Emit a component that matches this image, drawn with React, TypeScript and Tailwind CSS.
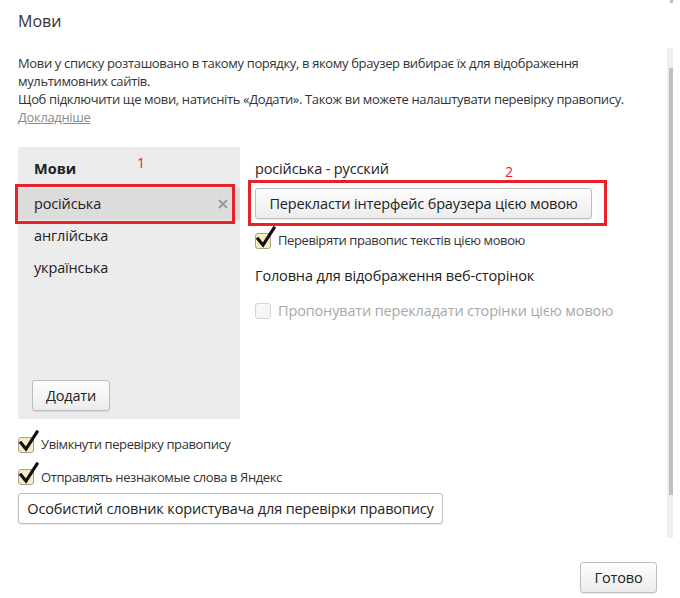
import React from 'react';

const font = { fontFamily: '"Open Sans", "Noto Sans", "Liberation Sans", sans-serif' };

function Check({ checked = true, disabled = false }: { checked?: boolean; disabled?: boolean }) {
  return (
    <span className="relative inline-block w-[16px] h-[16px] shrink-0">
      <span
        className={
          disabled
            ? 'absolute inset-0 rounded-[3px] border border-[#d4d4d4] bg-[#f7f7f7]'
            : 'absolute inset-0 rounded-[3px] border border-[#a8a08a] bg-[#f7ecc0]'
        }
      />
      {checked && (
        <svg className="absolute left-[1px] top-[-7px]" width="20" height="22" viewBox="0 0 20 22">
          <path d="M2 13 L7 19 L18 2" fill="none" stroke="#111" strokeWidth="3.2" strokeLinecap="square" />
        </svg>
      )}
    </span>
  );
}

function Btn({ children, className = '' }: { children: React.ReactNode; className?: string }) {
  return (
    <button
      className={
        'h-[31px] whitespace-nowrap rounded-[3px] border border-[#bdbdbd] text-[14.5px] tracking-[-0.15px] text-[#222] shadow-[0_1px_1px_rgba(0,0,0,0.08)] ' +
        className
      }
    >
      {children}
    </button>
  );
}

const grad = 'bg-gradient-to-b from-[#fdfdfd] to-[#ececec]';

export default function App() {
  const langs = ['російська', 'англійська', 'українська'];
  return (
    <div className="relative w-[680px] h-[598px] bg-white text-[#333] overflow-hidden" style={font}>
      {/* scrollbar */}
      <div className="absolute left-[667px] top-[48px] w-[6px] h-[490px] bg-[#efefef]">
        <div className="ml-[2px] mt-[20px] w-[4px] h-[427px] bg-[#c0c0c0]" />
      </div>
      <div className="absolute left-[670px] top-0 w-[3px] h-[3px] bg-[#bbb]" />

      <div className="pl-[18px] pt-[10px] pr-[30px]">
        <h1 className="text-[16px] leading-[22px] text-[#333]">Мови</h1>

        <p className="mt-[22px] text-[13px] leading-[18px] tracking-[-0.35px] text-[#333]">
          Мови у списку розташовано в такому порядку, в якому браузер вибирає їх для відображення
          <br />
          мультимовних сайтів.
          <br />
          Щоб підключити ще мови, натисніть «Додати». Також ви можете налаштувати перевірку правопису.
          <br />
          <span className="text-[#8a8a8a] underline">Докладніше</span>
        </p>

        <div className="mt-[21px] flex">
          {/* left list */}
          <div className="w-[222px] h-[272px] bg-[#ececec] flex flex-col">
            <div className="relative pl-[16px] pt-[11px] h-[41px] text-[14.5px] font-bold text-[#222]">
              Мови
              <span className="absolute left-[119px] top-[5px] text-[14px] font-normal text-[#e8202a]">1</span>
            </div>
            {langs.map((l, i) => (
              <div
                key={l}
                className={
                  'relative h-[32px] pl-[16px] flex items-center text-[14.5px] tracking-[-0.15px] text-[#222] ' +
                  (i === 0 ? 'bg-[#dcdcdc]' : '')
                }
              >
                {l}
                {i === 0 && (
                  <>
                    <svg className="absolute right-[12px] top-[11px]" width="10" height="10" viewBox="0 0 10 10">
                      <path d="M1 1 L9 9 M9 1 L1 9" stroke="#9a9a9a" strokeWidth="2" />
                    </svg>
                    <div className="absolute left-[-3px] top-[-4px] w-[220px] h-[40px] border-[3px] border-[#e8202a]" />
                  </>
                )}
              </div>
            ))}
            <div className="flex-1" />
            <div className="pl-[14px] pb-[8px]">
              <Btn className={'w-[78px] ' + grad}>Додати</Btn>
            </div>
          </div>

          {/* right pane */}
          <div className="pl-[15px] flex flex-col">
            <div className="relative pt-[11px] h-[41px] text-[14.5px] tracking-[-0.15px] text-[#222]">
              російська - русский
              <span className="absolute left-[250px] top-[14px] text-[14px] text-[#e8202a]">2</span>
            </div>
            <div className="relative">
              <Btn className={'w-[337px] ' + grad}>Перекласти інтерфейс браузера цією мовою</Btn>
              <div className="absolute left-[-7px] top-[-8px] w-[359px] h-[46px] border-[3px] border-[#e8202a]" />
            </div>
            <label className="mt-[12px] flex items-center gap-[7px] text-[13px] text-[#333]">
              <Check />
              <span className="tracking-[-0.4px]">Перевіряти правопис текстів цією мовою</span>
            </label>
            <div className="mt-[14px] text-[14.5px] tracking-[-0.15px] text-[#222]">Головна для відображення веб-сторінок</div>
            <label className="mt-[14px] flex items-center gap-[7px] text-[14.5px] tracking-[-0.15px] text-[#a8a8a8]">
              <Check checked={false} disabled />
              <span>Пропонувати перекладати сторінки цією мовою</span>
            </label>
          </div>
        </div>

        <label className="mt-[16px] flex items-center gap-[7px] text-[13px] text-[#333]">
          <Check />
          <span className="tracking-[-0.4px]">Увімкнути перевірку правопису</span>
        </label>
        <label className="mt-[13px] flex items-center gap-[7px] text-[13px] text-[#333]">
          <Check />
          <span className="tracking-[-0.4px]">Отправлять незнакомые слова в Яндекс</span>
        </label>
        <div className="mt-[6px]">
          <Btn className="w-[425px] bg-white">Особистий словник користувача для перевірки правопису</Btn>
        </div>
      </div>

      <div className="absolute left-[580px] top-[562px]">
        <Btn className={'w-[77px] ' + grad}>Готово</Btn>
      </div>
    </div>
  );
}
